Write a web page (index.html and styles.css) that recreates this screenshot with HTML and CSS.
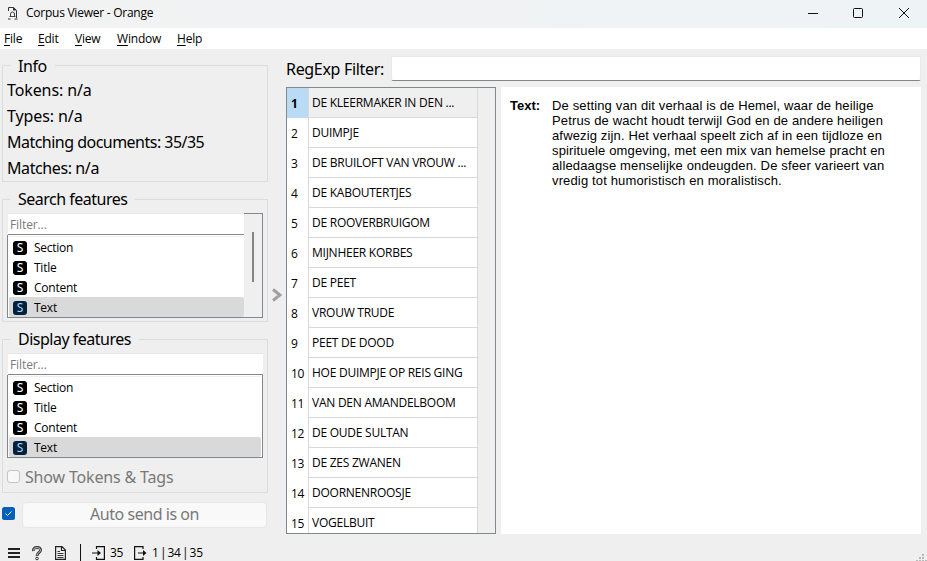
FILE: index.html
```html
<!DOCTYPE html>
<html lang="en">
<head>
<meta charset="utf-8">
<title>Corpus Viewer - Orange</title>
<link rel="stylesheet" href="styles.css">
</head>
<body>
<div class="window">
  <header class="titlebar">
    <svg class="app-icon" width="11" height="13" viewBox="0 0 11 13" fill="none" stroke="#333"><path d="M.5 4V.5H5.500L8.500 3.500V11M0 12H2.500M6.500 12H9.500"/><path d="M2.500 9.500V7Q2.500 5 4.500 5T6.500 7V9.500M1.500 9.500H7.500" stroke="#444"/><path d="M5 .5H6L9 3.500H5Z" fill="#333" stroke="none"/></svg>
    <h1 class="title">Corpus Viewer - Orange</h1>
    <div class="controls">
      <svg width="10" height="12" viewBox="0 0 10 12" stroke="#111" fill="none"><path d="M0 6.500H10"/></svg>
      <svg width="10" height="12" viewBox="0 0 10 12" stroke="#111" fill="none"><rect x=".5" y="1.500" width="9" height="9" rx="1"/></svg>
      <svg width="10" height="12" viewBox="0 0 10 12" stroke="#111" fill="none"><path d="M0 1L10 11M10 1L0 11"/></svg>
    </div>
  </header>
  <nav class="menubar">
    <span class="m-file"><u>F</u>ile</span><span class="m-edit"><u>E</u>dit</span><span class="m-view"><u>V</u>iew</span><span class="m-window"><u>W</u>indow</span><span class="m-help"><u>H</u>elp</span>
  </nav>
  <main class="main">
    <aside class="side">
      <fieldset class="group info">
        <legend>Info</legend>
        <p class="loose">Tokens: n/a</p><p class="loose">Types: n/a</p><p>Matching documents: 35/35</p><p>Matches: n/a</p>
      </fieldset>
      <fieldset class="group search">
        <legend>Search features</legend>
        <div class="listbox scrolls">
          <div class="list-main">
            <div class="filter">Filter...</div>
            <ul class="items">
              <li><b class="badge">S</b>Section</li><li><b class="badge">S</b>Title</li><li><b class="badge">S</b>Content</li><li class="selected"><b class="badge">S</b>Text</li>
            </ul>
          </div>
          <div class="scroll"><i class="thumb"></i></div>
        </div>
      </fieldset>
      <fieldset class="group display">
        <legend>Display features</legend>
        <div class="listbox">
          <div class="list-main">
            <div class="filter">Filter...</div>
            <ul class="items">
              <li><b class="badge">S</b>Section</li><li><b class="badge">S</b>Title</li><li><b class="badge">S</b>Content</li><li class="selected"><b class="badge">S</b>Text</li>
            </ul>
          </div>
        </div>
        <div class="check-row"><i class="checkbox"></i><span>Show Tokens &amp; Tags</span></div>
      </fieldset>
      <div class="send-row">
        <svg class="send-check" width="13" height="13" viewBox="0 0 13 13"><rect width="13" height="13" rx="2.500" fill="#005fb8"/><path d="M3.500 6.500L5.500 8.500L9.500 4.500" fill="none" stroke="#fff"/></svg>
        <div class="send">Auto send is on</div>
      </div>
    </aside>
    <div class="splitter"><svg width="10" height="14" viewBox="0 0 10 14" fill="none" stroke="#a0a0a0" stroke-width="3"><path d="M1 1.500L8 7L1 12.500"/></svg></div>
    <section class="content">
      <div class="regexp"><label class="regexp-label" for="re">RegExp Filter:</label><input id="re" class="regexp-input" type="text"></div>
      <div class="panes">
        <div class="table">
          <div class="rows">
            <div class="row current"><b>1</b><span>DE KLEERMAKER IN DEN ...</span></div>
            <div class="row"><b>2</b><span>DUIMPJE</span></div>
            <div class="row"><b>3</b><span>DE BRUILOFT VAN VROUW ...</span></div>
            <div class="row"><b>4</b><span>DE KABOUTERTJES</span></div>
            <div class="row"><b>5</b><span>DE ROOVERBRUIGOM</span></div>
            <div class="row"><b>6</b><span>MIJNHEER KORBES</span></div>
            <div class="row"><b>7</b><span>DE PEET</span></div>
            <div class="row"><b>8</b><span>VROUW TRUDE</span></div>
            <div class="row"><b>9</b><span>PEET DE DOOD</span></div>
            <div class="row"><b>10</b><span>HOE DUIMPJE OP REIS GING</span></div>
            <div class="row"><b>11</b><span>VAN DEN AMANDELBOOM</span></div>
            <div class="row"><b>12</b><span>DE OUDE SULTAN</span></div>
            <div class="row"><b>13</b><span>DE ZES ZWANEN</span></div>
            <div class="row"><b>14</b><span>DOORNENROOSJE</span></div>
            <div class="row"><b>15</b><span>VOGELBUIT</span></div>
          </div>
        </div>
        <article class="document">
          <strong>Text:</strong>
          <p>De setting van dit verhaal is de Hemel, waar de heilige<br>Petrus de wacht houdt terwijl God en de andere heiligen<br>afwezig zijn. Het verhaal speelt zich af in een tijdloze en<br>spirituele omgeving, met een mix van hemelse pracht en<br>alledaagse menselijke ondeugden. De sfeer varieert van<br>vredig tot humoristisch en moralistisch.</p>
        </article>
      </div>
    </section>
  </main>
  <footer class="status">
    <svg class="s-menu" width="12" height="14" viewBox="0 0 12 14" stroke="#222" stroke-width="2"><path d="M0 3H12M0 7H12M0 11H12"/></svg>
    <svg class="s-help" width="10" height="15" viewBox="0 0 10 15" fill="none"><path d="M1.500 5Q1 1.500 5 1.500T8.500 4.500C8.500 6.500 5 6.500 5 10" stroke="#333" stroke-width="2.800"/><path d="M1.500 4.500Q1.500 1.500 5 1.500T8.500 4.500C8.500 6.500 5 6.500 5 9.500" stroke="#efefef" stroke-width=".8"/><circle cx="5" cy="12.500" r="1.300" stroke="#333"/></svg>
    <svg class="s-doc" width="11" height="14" viewBox="0 0 11 14" fill="none" stroke="#222" stroke-width="1.200"><path d="M.6 .6H7L10.400 4V13.400H.6ZM6.500 .6V4.500H10.400"/><path d="M2.500 5.500H5M2.500 7.500H8.500M2.500 9.500H8.500M2.500 11.500H8.500" stroke="#333" stroke-width="1"/></svg>
    <i class="divider"></i>
    <svg class="s-in" width="13" height="14" viewBox="0 0 13 14" fill="none" stroke="#111" stroke-width="1.200"><path d="M4.500 3V.6H12.400V13.400H4.500V11M0 7H7"/><path d="M5.500 4L9 7L5.500 10Z" fill="#111" stroke="none"/></svg>
    <span class="count-in">35</span>
    <svg class="s-out" width="13" height="14" viewBox="0 0 13 14" fill="none" stroke="#111" stroke-width="1.200"><path d="M9 3V.6H.6V13.400H9V11M4 7H10"/><path d="M9 4L12.500 7L9 10Z" fill="#111" stroke="none"/></svg>
    <span class="count-out">1 | 34 | 35</span>
    <svg class="grip" width="11" height="8" viewBox="0 0 11 8" fill="#b8b8b8"><path d="M6 0h2v2h-2zM3 3h2v2h-2zM6 3h2v2h-2zM0 6h2v2h-2zM3 6h2v2h-2zM6 6h2v2h-2zM9 6h2v2h-2z"/></svg>
  </footer>
</div>
</body>
</html>
```
FILE: styles.css
```css
* { box-sizing: border-box; }
body { margin: 0; font: 12px/20px "Open Sans", "Noto Sans", sans-serif; color: #000; }
p, ul, h1 { margin: 0; padding: 0; }
svg { display: block; flex: none; }
.window { width: 927px; height: 561px; background: #efefef; display: flex; flex-direction: column; overflow: hidden; }

.titlebar { height: 28px; flex: none; display: flex; align-items: center; padding: 0 18px 2px 8px; background: linear-gradient(90deg, #f2f2f2, #eef3f5); }
.title { font-size: 12px; font-weight: 400; margin-left: 7px; letter-spacing: -.25px; white-space: nowrap; }
.controls { margin-left: auto; display: flex; gap: 36px; }
.controls svg:first-child { margin-right: -1px; }

.menubar { height: 21px; flex: none; display: flex; background: #fff; padding-left: 4px; line-height: 22px; letter-spacing: -.2px; }
.menubar span { white-space: nowrap; }
.menubar u { text-underline-offset: 2px; }
.m-file { width: 34px; }
.m-edit { width: 37px; }
.m-view { width: 42px; }
.m-window { width: 60px; }

.main { height: 485px; flex: none; display: flex; }
.side { width: 268px; padding: 6px 0 0 2px; font: 16px/26px "Noto Sans", sans-serif; }
.group { margin: 0; min-width: 0; border: 1px solid #dcdcdc; padding: 0 4px; width: 266px; }
.group legend { height: 20px; line-height: 20px; margin-left: 3px; padding: 0 8px; white-space: nowrap; letter-spacing: -.5px; }
.group.info legend { line-height: 22px; letter-spacing: -.4px; }
.info { height: 127px; }
.info p { letter-spacing: -.52px; white-space: nowrap; position: relative; top: 2px; }
.info p:last-child { letter-spacing: -.4px; }
.info .loose { letter-spacing: -.1px; }
.search { height: 133px; margin-top: 7px; }
.display { height: 164px; margin-top: 7px; }

.listbox { display: flex; width: 256px; height: 105px; margin-top: 4px; font: 12px/20px "Open Sans", sans-serif; letter-spacing: -.25px; }
.list-main { flex: 1; display: flex; flex-direction: column; }
.filter { height: 22px; margin-left: 1px; background: #fff; border-top: 1px solid #e8e8e8; border-bottom: 1px solid #858585; padding-left: 2px; color: #7b7b7b; line-height: 21px; letter-spacing: -.1px; }
.items { list-style: none; flex: 1; background: #fff; border: solid #828790; border-width: 0 1px 1px; padding: 1px 1px 0; }
.items::before { content: ""; display: block; height: 1px; background: #efefef; }
.items li { display: flex; align-items: center; height: 20px; padding: 2px 0 0 4px; }
.items .selected { background: #d9d9d9; border-radius: 2px; }
.badge { width: 14px; height: 14px; margin-right: 7px; border-radius: 3px; background: #000; color: #fff; font: 12px/14px "Noto Sans", sans-serif; text-align: center; }
.selected .badge { background: #00203d; color: #a9d4f5; }
.scrolls .items { border-right: 0; padding-right: 0; }
.scroll { width: 19px; border: solid #828790; border-width: 1px 1px 1px 0; padding: 18px 0 0 8px; }
.thumb { display: block; width: 2px; height: 50px; background: #858585; }

.check-row { display: flex; align-items: center; gap: 5px; height: 26px; margin-top: 5px; color: #787878; letter-spacing: -.17px; white-space: nowrap; }
.check-row span { padding-top: 2px; }
.checkbox { width: 13px; height: 13px; border: 1px solid #c4c4c4; border-radius: 3px; background: #f8f8f8; }
.send-row { display: flex; align-items: center; gap: 7px; height: 26px; margin-top: 9px; }
.send-check { margin-bottom: 3px; }
.send { width: 245px; height: 26px; line-height: 23px; border: 1px solid #e6e6e6; border-radius: 4px; background: #f9f9f9; color: #787878; text-align: center; letter-spacing: -.45px; }

.splitter { width: 18px; display: flex; justify-content: center; padding-top: 239px; }
.content { width: 635px; padding-top: 7px; }
.regexp { display: flex; height: 25px; width: 635px; }
.regexp-label { width: 105px; font: 16px/26px "Noto Sans", sans-serif; letter-spacing: -.32px; white-space: nowrap; }
.regexp-input { flex: 1; min-width: 0; height: 25px; border: 1px solid #e9e9e9; border-bottom-color: #858585; border-radius: 2px; background: #fff; outline: 0; }
.panes { display: flex; gap: 5px; height: 447px; margin-top: 6px; }
.table { width: 210px; height: 447px; border: 1px solid #828790; overflow: hidden; }
.rows { width: 191px; }
.row { display: grid; grid-template: 30px / 22px 1fr; height: 30px; line-height: 29px; background: #fff; border-right: 1px solid #d8d8d8; white-space: nowrap; }
.row b { font-weight: 400; line-height: 32px; padding-left: 4px; border-right: 1px solid #d8d8d8; letter-spacing: -.3px; }
.row span { padding-left: 3px; border-bottom: 1px solid #d8d8d8; letter-spacing: -.25px; }
.current span { background: #efefef; }
.row.current b { background: #b9dcf4; font-weight: 700; }
.document { width: 420px; background: #fff; display: flex; padding: 11px 0 0 9px; font: 13px/15px "Liberation Sans", Arial, sans-serif; }
.document strong { width: 42px; flex: none; }
.document p { white-space: nowrap; letter-spacing: .145px; }

.status { flex: 1; display: flex; align-items: center; padding: 9px 0 0 8px; white-space: nowrap; }
.s-help { margin-left: 12px; }
.s-doc { margin-left: 13px; }
.divider { width: 1px; height: 18px; background: #111; margin: 0 11px 0 14px; }
.count-in { margin-left: 5px; width: 24px; letter-spacing: -.4px; }
.count-out { margin-left: 5px; letter-spacing: -.25px; word-spacing: -1.600px; }
.grip { margin: 10px 0 0 auto; }
```
